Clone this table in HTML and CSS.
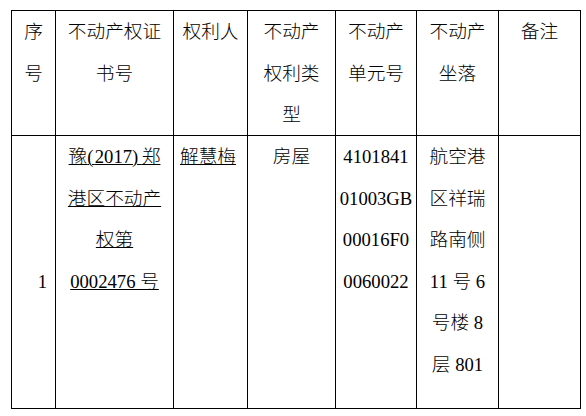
FILE: index.html
```html
<!DOCTYPE html>
<html lang="zh-CN">
<head>
<meta charset="utf-8">
<title>不动产登记表</title>
<link rel="stylesheet" href="styles.css">
</head>
<body>
<div class="sheet">
  <div class="cell">序<br>号</div>
  <div class="cell">不动产权证<br>书号</div>
  <div class="cell">权利人</div>
  <div class="cell">不动产<br>权利类<br>型</div>
  <div class="cell">不动产<br>单元号</div>
  <div class="cell">不动产<br>坐落</div>
  <div class="cell">备注</div>

  <div class="cell idx">1</div>
  <div class="cell"><span class="u">豫<span class="pl">(</span>2017<span class="pr">)</span>郑</span><br><span class="u">港区不动产</span><br><span class="u">权第</span><br><span class="u">0002476 号</span></div>
  <div class="cell left"><span class="u">解慧梅</span></div>
  <div class="cell">房屋</div>
  <div class="cell">4101841<br>01003GB<br>00016F0<br>0060022</div>
  <div class="cell">航空港<br>区祥瑞<br>路南侧<br>11 号 6<br>号楼 8<br>层 801</div>
  <div class="cell"></div>
</div>
</body>
</html>
```
FILE: styles.css
```css
html, body {
  margin: 0;
  padding: 0;
  background: #fff;
}

body {
  padding: 10px 0 0 11px;
}

.sheet {
  display: grid;
  grid-template-columns: 43px 117px 73px 87px 80px 81px 81px;
  grid-template-rows: 124px 272px;
  gap: 1px;
  padding: 1px;
  background: #000;
  width: max-content;
}

.cell {
  background: #fff;
  color: #000;
  font-family: "Liberation Serif", "Noto Sans CJK SC", serif;
  font-size: 18.67px;
  font-weight: 300;
  line-height: 41.6px;
  text-align: center;
  overflow: hidden;
}

.idx {
  text-align: right;
  padding-top: 124.8px;
  padding-right: 8px;
}

.left {
  text-align: left;
  padding-left: 6px;
}

.u {
  text-decoration: underline;
  text-decoration-thickness: 1px;
  text-underline-offset: 1px;
}

.pl {
  letter-spacing: 1.3px;
}

.pr {
  letter-spacing: 3.5px;
}
```
